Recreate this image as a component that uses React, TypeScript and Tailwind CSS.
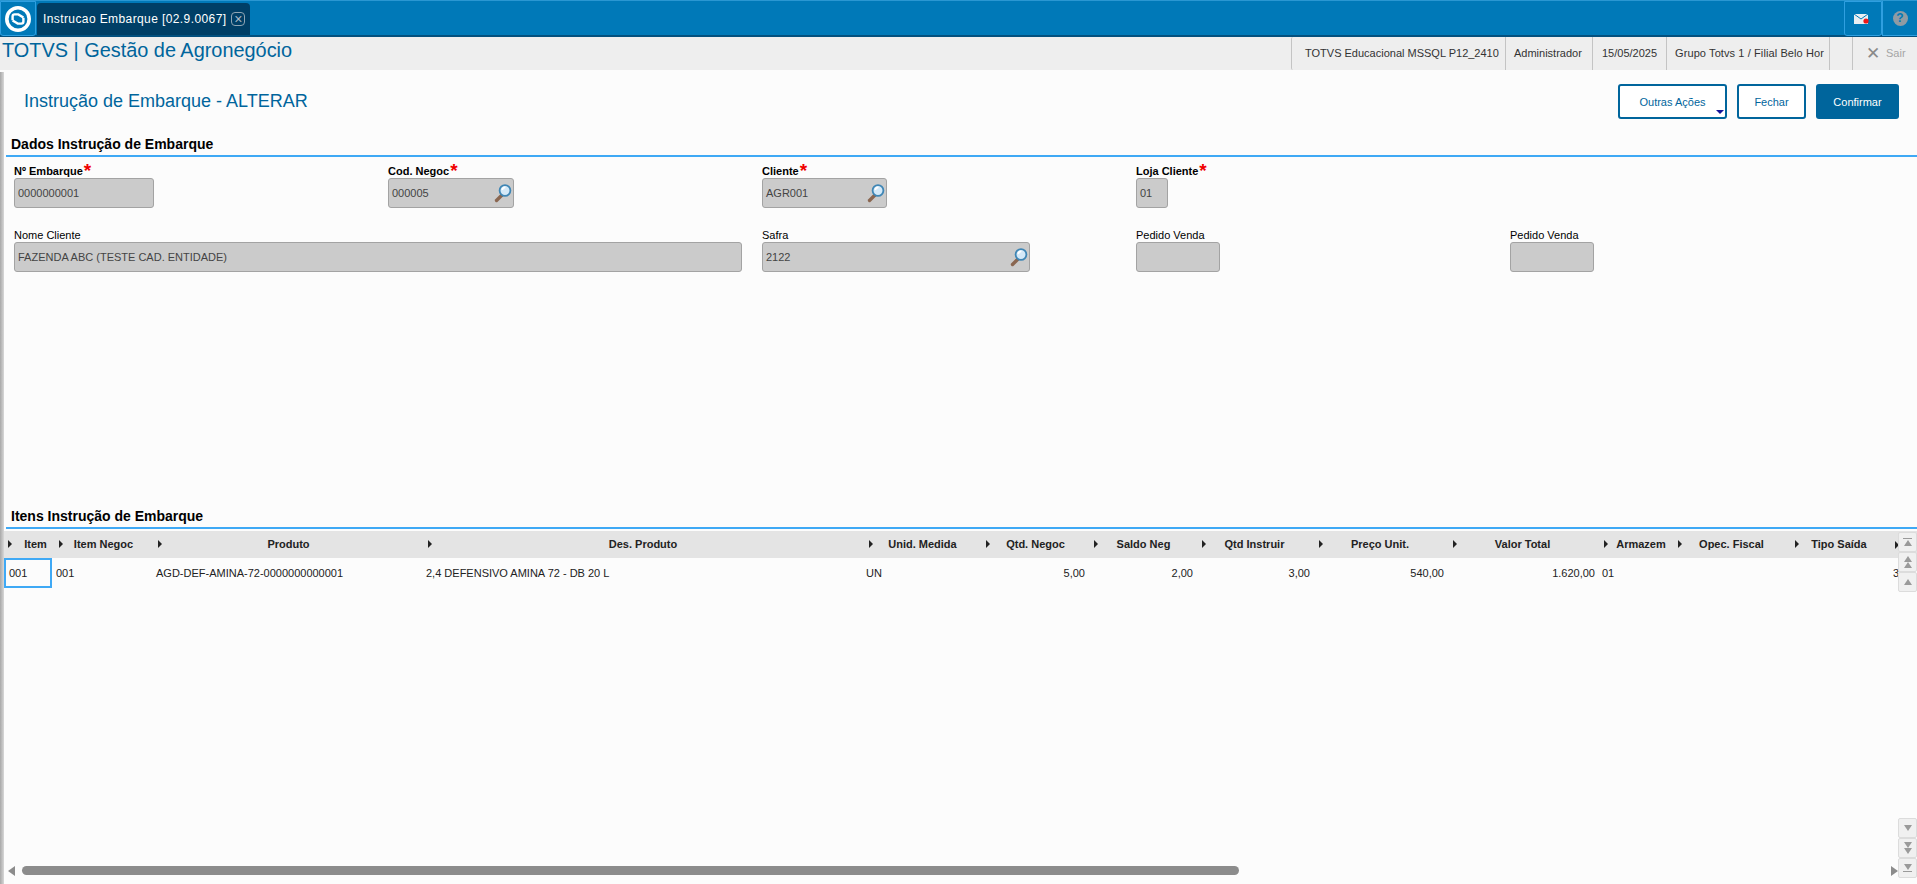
import React from 'react';

const columns = [
  { title: 'Item', width: 'w-[51px]', shift: 'pl-[10px]' },
  { title: 'Item Negoc', width: 'w-[99px]', shift: 'pr-[4px]' },
  { title: 'Produto', width: 'w-[270px]', shift: 'pr-[3px]' },
  { title: 'Des. Produto', width: 'w-[441px]', shift: 'pr-[5px]' },
  { title: 'Unid. Medida', width: 'w-[117px]', shift: 'pr-[4px]' },
  { title: 'Qtd. Negoc', width: 'w-[108px]', shift: 'pr-[3px]' },
  { title: 'Saldo Neg', width: 'w-[108px]', shift: 'pr-[3px]' },
  { title: 'Qtd Instruir', width: 'w-[117px]', shift: 'pr-[6px]' },
  { title: 'Preço Unit.', width: 'w-[134px]', shift: 'pr-[6px]' },
  { title: 'Valor Total', width: 'w-[151px]', shift: 'pr-[6px]' },
  { title: 'Armazem', width: 'w-[74px]', shift: 'pl-[6px]' },
  { title: 'Opec. Fiscal', width: 'w-[117px]', shift: 'pr-[4px]' },
  { title: 'Tipo Saída', width: 'w-[100px]', shift: 'pr-[6px]' }
];

const Logo = () => (
  <svg width="28" height="28" viewBox="0 0 28 28">
    <circle cx="14" cy="14" r="11.2" fill="none" stroke="#fff" strokeWidth="3.6" />
    <path d="M8.6 15.2 V11.4 Q8.6 9.4 10.6 9.4 H14.4 L19.4 12.6" fill="none" stroke="#fff" strokeWidth="2.4" strokeLinejoin="round" />
    <path d="M19.4 12.8 V16.6 Q19.4 18.6 17.4 18.6 H13.6 L8.6 15.4" fill="none" stroke="#fff" strokeWidth="2.4" strokeLinejoin="round" />
  </svg>
);

const Lupa = () => (
  <svg width="18" height="20" viewBox="0 0 18 20" className="shrink-0">
    <path d="M8 12 L2.5 17.5" stroke="#8a6650" strokeWidth="3.4" strokeLinecap="round" />
    <circle cx="11" cy="7.5" r="5.4" fill="#d4e9f8" stroke="#3f86b5" strokeWidth="1.8" />
    <path d="M8.2 7 A3.2 3.2 0 0 1 11.4 4.4" stroke="#fff" strokeWidth="1.6" fill="none" />
  </svg>
);

const Seta = () => (
  <span className="block w-0 h-0 border-y-[4px] border-y-transparent border-l-[4px] border-l-[#222]" />
);

const Field = ({ label, required, value, lupa, width, className }: {
  label: string;
  required?: boolean;
  value?: string;
  lupa?: boolean;
  width: string;
  className?: string;
}) => (
  <div className={className}>
    <div className={`h-[20px] pt-[6px] flex items-start text-[11px] leading-[14px] text-black whitespace-nowrap ${required ? 'font-bold' : ''}`}>
      {label}
      {required && <span className="text-[#f00000] text-[19px] leading-[14px] font-bold ml-px">*</span>}
    </div>
    <div className={`${width} h-[30px] bg-[#cbcbcb] border border-[#a3a3a3] rounded-[3px] flex items-center justify-between pl-[3px] pr-[1px] text-[11px] text-[#444]`}>
      <span>{value}</span>
      {lupa && <Lupa />}
    </div>
  </div>
);

const SectionTitle = ({ text }: { text: string }) => (
  <div className="ml-[6px] border-b-2 border-[#3fa9f5] h-[20px] pl-[5px] text-[14px] leading-[14px] font-bold text-black">
    {text}
  </div>
);

const ScrollBtn = ({ children }: { children: React.ReactNode }) => (
  <div className="w-[19px] h-[20px] bg-[#f0f0f0] border border-[#dcdcdc] rounded-[2px] flex flex-col items-center justify-center">
    {children}
  </div>
);

const Up = () => <span className="w-0 h-0 border-x-[4px] border-x-transparent border-b-[6px] border-b-[#9a9a9a]" />;
const Down = () => <span className="w-0 h-0 border-x-[4px] border-x-transparent border-t-[6px] border-t-[#9a9a9a]" />;

const Cell = ({ children, right, width, extra }: { children?: React.ReactNode; right?: boolean; width: string; extra?: string }) => (
  <div className={`${width} shrink-0 h-full flex items-center whitespace-nowrap overflow-hidden ${right ? 'justify-end pr-[6px]' : ''} ${extra ?? ''}`}>
    {children}
  </div>
);

export default function App() {
  return (
    <div className="h-screen w-full overflow-hidden flex flex-col bg-[#fcfcfc] font-['Liberation_Sans',Arial,sans-serif]">
      {/* barra azul */}
      <div className="h-[37px] shrink-0 bg-[#0079b8] border-t border-[#2a97d2] border-b-2 border-b-[#03507e] flex">
        <div className="w-[36px] h-[35px] border border-[#2f9fe0] rounded-b-[3px] flex items-center justify-center">
          <Logo />
        </div>
        <div className="ml-px mt-[2px] w-[213px] bg-[#003f66] rounded-t-[4px] flex items-center pl-[6px] text-white text-[12px]">
          <span className="tracking-[0.4px] whitespace-nowrap">Instrucao Embarque [02.9.0067]</span>
          <span className="ml-[5px] w-[14px] h-[14px] rounded-[4px] border border-[#8fa5b4] text-[#a9bac6] flex items-center justify-center text-[14px] leading-none">×</span>
        </div>
        <div className="ml-auto flex">
          <div className="w-[38px] h-[35px] border border-[#2f9fe0] rounded-b-[3px] flex items-center justify-center pr-[3px]">
            <svg width="16" height="12" viewBox="0 0 16 12">
              <rect y="1" width="14" height="10" fill="#e9eef2" />
              <path d="M0 1 L7 6 L14 1" fill="none" stroke="#0079b8" strokeWidth="1" />
              <circle cx="12" cy="8" r="2.6" fill="#f01818" />
            </svg>
          </div>
          <div className="w-[35px] h-[35px] border-l border-b border-[#2f9fe0] flex items-center justify-center">
            <span className="w-[15px] h-[15px] rounded-full bg-[#8f9ba3] text-[#0079b8] text-[12px] font-bold flex items-center justify-center">?</span>
          </div>
        </div>
      </div>

      {/* barra do modulo */}
      <div className="h-[33px] shrink-0 bg-[#eeeeee] flex items-stretch">
        <div className="text-[#00659c] text-[19.9px] leading-[26px] pl-[2px]">TOTVS | Gestão de Agronegócio</div>
        <div className="ml-auto flex text-[11px] text-[#333] items-stretch">
          <div className="w-[214px] border-l border-[#c4c4c4] rounded-l-[2px] flex items-center pl-[13px] whitespace-nowrap">TOTVS Educacional MSSQL P12_2410</div>
          <div className="w-[87px] border-l border-[#c4c4c4] flex items-center pl-[8px]">Administrador</div>
          <div className="w-[74px] border-l border-[#c4c4c4] flex items-center pl-[9px]">15/05/2025</div>
          <div className="w-[163px] border-l border-[#c4c4c4] flex items-center pl-[8px] whitespace-nowrap tracking-[0.1px]">Grupo Totvs 1 / Filial Belo Hor</div>
          <div className="w-[23px] border-l border-[#c4c4c4]" />
          <div className="w-[65px] border-l border-[#c4c4c4] flex items-center pl-[13px] text-[#a5a5a5]">
            <span className="text-[#8a8a8a] text-[17px] leading-none mr-[6px]">✕</span>Sair
          </div>
        </div>
      </div>

      {/* conteudo */}
      <div className="flex-1 min-h-0 flex mt-[2px]">
        <div className="w-[4px] shrink-0 bg-gradient-to-r from-[#a8a8a8] to-[#d8d8d8]" />
        <div className="flex-1 min-w-0 flex flex-col -ml-[4px] relative">
          <div className="h-[49px] shrink-0 flex items-start justify-between pl-[24px] pr-[18px]">
            <div className="text-[#00659c] text-[18px] leading-[22px] mt-[18px]">Instrução de Embarque - ALTERAR</div>
            <div className="flex mt-[12px] text-[11px]">
              <div className="relative w-[109px] h-[35px] border-2 border-[#00659c] rounded-[3px] flex items-center justify-center pt-px text-[#00659c] bg-white">
                Outras Ações
                <span className="absolute right-[1px] bottom-[3px] w-0 h-0 border-x-[4px] border-x-transparent border-t-[4px] border-t-[#14149a]" />
              </div>
              <div className="ml-[10px] w-[69px] h-[35px] border-2 border-[#00659c] rounded-[3px] flex items-center justify-center pt-px text-[#00659c] bg-white">Fechar</div>
              <div className="ml-[10px] w-[83px] h-[35px] bg-[#00659c] rounded-[3px] flex items-center justify-center pt-px text-white">Confirmar</div>
            </div>
          </div>

          <div className="mt-[16px] shrink-0"><SectionTitle text="Dados Instrução de Embarque" /></div>

          <div className="h-[352px] shrink-0 pt-[1px] pl-[14px]">
            <div className="flex">
              <Field label="Nº Embarque" required value="0000000001" width="w-[140px]" className="w-[374px]" />
              <Field label="Cod. Negoc" required value="000005" lupa width="w-[126px]" className="w-[374px]" />
              <Field label="Cliente" required value="AGR001" lupa width="w-[125px]" className="w-[374px]" />
              <Field label="Loja Cliente" required value="01" width="w-[32px]" className="w-[374px]" />
            </div>
            <div className="flex mt-[14px]">
              <Field label="Nome Cliente" value="FAZENDA ABC (TESTE CAD. ENTIDADE)" width="w-[728px]" className="w-[748px]" />
              <Field label="Safra" value="2122" lupa width="w-[268px]" className="w-[374px]" />
              <Field label="Pedido Venda" width="w-[84px]" className="w-[374px]" />
              <Field label="Pedido Venda" width="w-[84px]" className="w-[374px]" />
            </div>
          </div>

          <SectionTitle text="Itens Instrução de Embarque" />

          {/* grid de itens */}
          <div className="flex-1 min-h-0 flex flex-col pl-[5px] relative overflow-hidden">
            <div className="h-[27px] mt-[2px] -ml-[1px] pl-[1px] shrink-0 bg-[#e4e4e4] flex text-[11px] font-bold text-[#222]">
              {columns.map(({ title, width, shift }) => (
                <div key={title} className={`${width} ${shift} shrink-0 h-full flex items-center relative justify-center whitespace-nowrap`}>
                  <span className="absolute left-[3px] top-[9px]"><Seta /></span>
                  <span>{title}</span>
                </div>
              ))}
              <div className="shrink-0 h-full flex items-center pl-[3px]"><Seta /></div>
            </div>
            <div className="h-[30px] shrink-0 flex text-[11px] text-[#222]">
              <Cell width="w-[48px]" extra="-ml-[1px] border-2 border-[#3fa9f5] pl-[3px] mr-[4px]">001</Cell>
              <Cell width="w-[99px]">001</Cell>
              <Cell width="w-[270px]" extra="pl-px">AGD-DEF-AMINA-72-0000000000001</Cell>
              <Cell width="w-[441px]" extra="pl-px">2,4 DEFENSIVO AMINA 72 - DB 20 L</Cell>
              <Cell width="w-[117px]">UN</Cell>
              <Cell width="w-[108px]" right>5,00</Cell>
              <Cell width="w-[108px]" right>2,00</Cell>
              <Cell width="w-[117px]" right>3,00</Cell>
              <Cell width="w-[134px]" right>540,00</Cell>
              <Cell width="w-[151px]" right>1.620,00</Cell>
              <Cell width="w-[74px]" extra="pl-px">01</Cell>
              <Cell width="w-[117px]" />
              <Cell width="w-[100px]" />
              <Cell width="w-[20px]" extra="pl-px">3</Cell>
            </div>
            <div className="flex-1" />
            <div className="h-[9px] mb-[9px] shrink-0 flex items-center pl-[3px] pr-[19px]">
              <span className="w-0 h-0 border-y-[5px] border-y-transparent border-r-[7px] border-r-[#8c8c8c]" />
              <div className="ml-[7px] w-[1217px] h-[9px] rounded-full bg-[#8c8c8c]" />
              <span className="ml-auto w-0 h-0 border-y-[5px] border-y-transparent border-l-[7px] border-l-[#8c8c8c]" />
            </div>
          </div>

          {/* botoes de rolagem sobre o grid */}
          <div className="absolute right-0 top-[460px] flex flex-col">
            <ScrollBtn><span className="w-[9px] h-px bg-[#9a9a9a] mb-px" /><Up /></ScrollBtn>
            <ScrollBtn><Up /><Up /></ScrollBtn>
            <ScrollBtn><Up /></ScrollBtn>
          </div>
          <div className="absolute right-0 bottom-[6px] flex flex-col">
            <ScrollBtn><Down /></ScrollBtn>
            <ScrollBtn><Down /><Down /></ScrollBtn>
            <ScrollBtn><Down /><span className="w-[9px] h-px bg-[#9a9a9a] mt-px" /></ScrollBtn>
          </div>
        </div>
      </div>
    </div>
  );
}
